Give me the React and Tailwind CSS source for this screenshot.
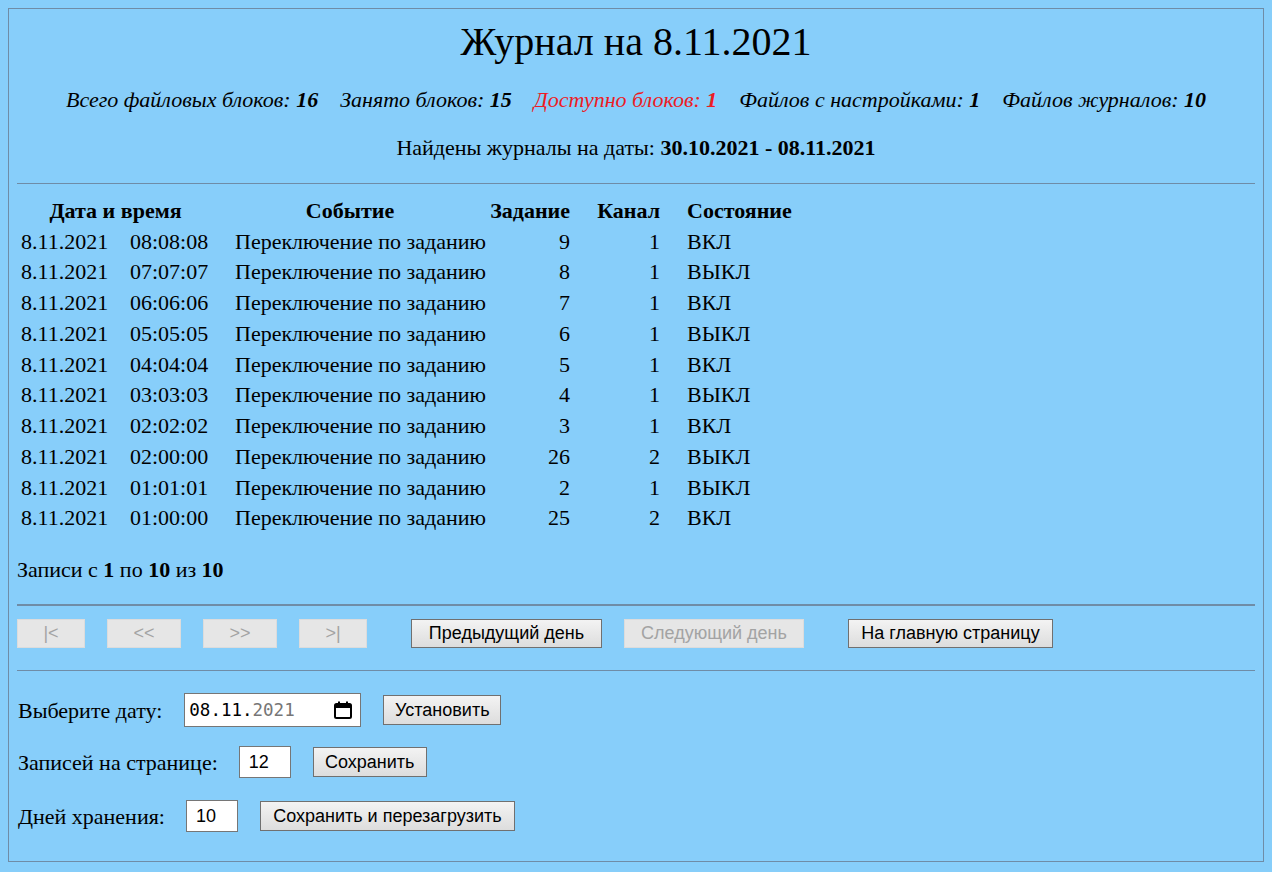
import React from "react";

const rows = [
  ["8.11.2021", "08:08:08", "9", "1", "ВКЛ"],
  ["8.11.2021", "07:07:07", "8", "1", "ВЫКЛ"],
  ["8.11.2021", "06:06:06", "7", "1", "ВКЛ"],
  ["8.11.2021", "05:05:05", "6", "1", "ВЫКЛ"],
  ["8.11.2021", "04:04:04", "5", "1", "ВКЛ"],
  ["8.11.2021", "03:03:03", "4", "1", "ВЫКЛ"],
  ["8.11.2021", "02:02:02", "3", "1", "ВКЛ"],
  ["8.11.2021", "02:00:00", "26", "2", "ВЫКЛ"],
  ["8.11.2021", "01:01:01", "2", "1", "ВЫКЛ"],
  ["8.11.2021", "01:00:00", "25", "2", "ВКЛ"],
];

const btn =
  "h-[29px] border border-[#707070] bg-gradient-to-b from-[#f3f3f3] to-[#dddddd] text-[18px] text-black font-['Liberation_Sans',Arial,sans-serif] flex items-center justify-center whitespace-nowrap";
const btnOff =
  "h-[29px] border border-[#dcdcdc] bg-[#e6e6e6] text-[18px] text-[#a3a3a3] font-['Liberation_Sans',Arial,sans-serif] flex items-center justify-center whitespace-nowrap";

function Cal() {
  return (
    <svg width="20" height="20" viewBox="0 0 20 20">
      <rect x="2" y="4" width="16" height="14" rx="1.5" fill="none" stroke="#000" strokeWidth="2" />
      <rect x="2" y="4" width="16" height="4" fill="#000" />
      <rect x="5" y="1.5" width="2" height="4" fill="#000" />
      <rect x="13" y="1.5" width="2" height="4" fill="#000" />
    </svg>
  );
}

export default function App() {
  return (
    <div className="min-h-[872px] bg-[#87cefa] p-2 font-['Liberation_Serif','Times_New_Roman',serif] text-[22px] text-black">
      <div className="border border-[#6f8ca6] px-2 pb-[28px]">
        <h1 className="mt-[10px] h-[46px] leading-[46px] text-center text-[40px] font-normal">
          Журнал на 8.11.2021
        </h1>
        <div className="mt-[21px] h-[28px] leading-[28px] flex justify-center gap-[22px] italic whitespace-nowrap">
          <span>Всего файловых блоков: <b>16</b></span>
          <span>Занято блоков: <b>15</b></span>
          <span className="text-[#ec1c24]">Доступно блоков: <b>1</b></span>
          <span>Файлов с настройками: <b>1</b></span>
          <span>Файлов журналов: <b>10</b></span>
        </div>
        <div className="mt-[20px] h-[28px] leading-[28px] text-center">
          Найдены журналы на даты: <b>30.10.2021 - 08.11.2021</b>
        </div>
        <div className="mt-[21px] h-px bg-[#6f8ca6]" />

        <div className="mt-[11px] pl-[4px] whitespace-nowrap">
          <div className="flex h-[30.75px] items-center font-bold">
            <div className="w-[189px] text-center">Дата и время</div>
            <div className="w-[250px] ml-[25px] pr-[20px] text-center">Событие</div>
            <div className="w-[85px] text-right">Задание</div>
            <div className="w-[90px] text-right">Канал</div>
            <div className="pl-[27px]">Состояние</div>
          </div>
          {rows.map((r, i) => (
            <div key={i} className="flex h-[30.75px] items-center">
              <div className="w-[109px]">{r[0]}</div>
              <div className="w-[105px]">{r[1]}</div>
              <div className="w-[250px]">Переключение по заданию</div>
              <div className="w-[85px] text-right">{r[2]}</div>
              <div className="w-[90px] text-right">{r[3]}</div>
              <div className="pl-[27px]">{r[4]}</div>
            </div>
          ))}
        </div>

        <div className="mt-[23px] h-[28px] leading-[28px]">
          Записи с <b>1</b> по <b>10</b> из <b>10</b>
        </div>
        <div className="mt-[20px] h-[2px] bg-[#6f8ca6]" />

        <div className="mt-[13px] flex items-center">
          <div className={btnOff + " w-[68px]"}>|&lt;</div>
          <div className={btnOff + " w-[74px] ml-[22px]"}>&lt;&lt;</div>
          <div className={btnOff + " w-[74px] ml-[22px]"}>&gt;&gt;</div>
          <div className={btnOff + " w-[68px] ml-[22px]"}>&gt;|</div>
          <div className={btn + " w-[191px] ml-[44px]"}>Предыдущий день</div>
          <div className={btnOff + " w-[180px] ml-[22px]"}>Следующий день</div>
          <div className={btn + " w-[205px] ml-[44px]"}>На главную страницу</div>
        </div>
        <div className="mt-[22px] h-px bg-[#6f8ca6]" />

        <div className="mt-[22px] flex h-[34px] items-center pl-px whitespace-nowrap">
          <span>Выберите дату:</span>
          <div className="ml-[22px] flex h-[34px] w-[177px] items-center justify-between border border-[#767676] bg-white pl-[4px] pr-[7px] font-['DejaVu_Sans_Mono',monospace] text-[17.5px]">
            <span>
              08.11.<span className="text-[#767676]">2021</span>
            </span>
            <Cal />
          </div>
          <div className={btn + " w-[118px] ml-[22px] h-[30px]"}>Установить</div>
        </div>

        <div className="mt-[18px] flex h-[34px] items-center pl-px whitespace-nowrap">
          <span>Записей на странице:</span>
          <div className="ml-[21px] flex h-[32px] w-[52px] items-center border border-[#767676] bg-white pl-[9px] font-['Liberation_Sans',Arial,sans-serif] text-[18px]">
            12
          </div>
          <div className={btn + " w-[114px] ml-[22px] h-[30px]"}>Сохранить</div>
        </div>

        <div className="mt-[20px] flex h-[34px] items-center pl-px whitespace-nowrap">
          <span>Дней хранения:</span>
          <div className="ml-[21px] flex h-[32px] w-[52px] items-center border border-[#767676] bg-white pl-[9px] font-['Liberation_Sans',Arial,sans-serif] text-[18px]">
            10
          </div>
          <div className={btn + " w-[255px] ml-[22px] h-[30px]"}>Сохранить и перезагрузить</div>
        </div>
      </div>
    </div>
  );
}
